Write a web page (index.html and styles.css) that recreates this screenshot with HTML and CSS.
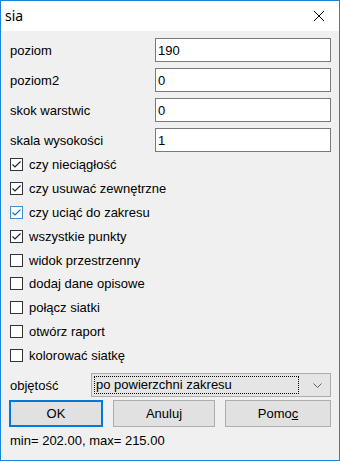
FILE: index.html
```html
<!DOCTYPE html>
<html>
  <head>
    <meta charset="utf-8" />
    <title>sia</title>
    <link rel="stylesheet" href="styles.css">
  </head>
  <body>
    <div class="window">
      <div class="titlebar">
        <span class="title">sia</span>
        <svg class="close" width="12" height="12" viewBox="0 0 12 12">
          <path d="M1 1 L11 11 M11 1 L1 11" stroke="#000" stroke-width="1" fill="none" />
        </svg>
      </div>

      <div class="client">
        <div class="fields">
          <div class="field"><label>poziom</label><input class="edit" type="text" value="190" /></div>
          <div class="field"><label>poziom2</label><input class="edit" type="text" value="0" /></div>
          <div class="field"><label>skok warstwic</label><input class="edit" type="text" value="0" /></div>
          <div class="field"><label>skala wysokości</label><input class="edit" type="text" value="1" /></div>
        </div>

        <div class="checks">
          <div class="check">
            <span class="box"><svg viewBox="0 0 11 11"><polyline points="1.5,5.5 4,8 9.5,2.5" /></svg></span>
            czy nieciągłość
          </div>
          <div class="check">
            <span class="box"><svg viewBox="0 0 11 11"><polyline points="1.5,5.5 4,8 9.5,2.5" /></svg></span>
            czy usuwać zewnętrzne
          </div>
          <div class="check">
            <span class="box hot"><svg viewBox="0 0 11 11"><polyline points="1.5,5.5 4,8 9.5,2.5" /></svg></span>
            czy uciąć do zakresu
          </div>
          <div class="check">
            <span class="box"><svg viewBox="0 0 11 11"><polyline points="1.5,5.5 4,8 9.5,2.5" /></svg></span>
            wszystkie punkty
          </div>
          <div class="check"><span class="box"></span>widok przestrzenny</div>
          <div class="check"><span class="box"></span>dodaj dane opisowe</div>
          <div class="check"><span class="box"></span>połącz siatki</div>
          <div class="check"><span class="box"></span>otwórz raport</div>
          <div class="check"><span class="box"></span>kolorować siatkę</div>
        </div>

        <div class="combo-row">
          <label>objętość</label>
          <div class="combo">
            <span class="combo-text">po powierzchni zakresu</span>
            <svg class="chevron" width="9" height="5" viewBox="0 0 9 5">
              <polyline points="0.5,0.5 4.5,4.5 8.5,0.5" />
            </svg>
          </div>
        </div>

        <div class="buttons">
          <button class="btn btn-ok">OK</button>
          <button class="btn btn-cancel">Anuluj</button>
          <button class="btn btn-help">Pomo<u>c</u></button>
        </div>

        <div class="status">min= 202.00, max= 215.00</div>
      </div>
    </div>
  </body>
</html>
```

FILE: styles.css
```css
html,
body {
  margin: 0;
  padding: 0;
}
body {
  font-family: "Liberation Sans", Arial, sans-serif;
  font-size: 13px;
  color: #000;
  background: #f0f0f0;
}
.window {
  width: 340px;
  height: 461px;
  box-sizing: border-box;
  border: 1px solid #1883d7;
  background: #f0f0f0;
  display: flex;
  flex-direction: column;
}
.titlebar {
  height: 30px;
  background: #fff;
  display: flex;
  align-items: center;
  justify-content: space-between;
  padding: 0 14px 0 4px;
}
.title {
  font-family: "Noto Sans", "Open Sans", sans-serif;
  font-size: 14px;
  margin-top: -1px;
}
.close {
  display: block;
}
.client {
  padding: 7px 8px 0 8px;
  display: flex;
  flex-direction: column;
}
.fields {
  display: flex;
  flex-direction: column;
  gap: 6px;
}
.field {
  display: grid;
  grid-template-columns: 146px 176px;
  align-items: center;
  height: 24px;
}
.field label {
  padding-left: 1px;
}
.edit {
  box-sizing: border-box;
  width: 176px;
  height: 24px;
  margin: 0;
  border: 1px solid #7a7a7a;
  background: #fff;
  padding: 0 2px;
  font-family: "Liberation Sans", Arial, sans-serif;
  font-size: 13px;
  color: #000;
  outline: none;
}
.checks {
  margin-top: 1px;
  display: flex;
  flex-direction: column;
}
.check {
  height: 23.8px;
  display: flex;
  align-items: center;
  gap: 6px;
}
.box {
  box-sizing: border-box;
  width: 13px;
  height: 13px;
  margin-left: 1px;
  border: 1px solid #333;
  background: #fff;
  display: flex;
}
.box svg {
  width: 11px;
  height: 11px;
  fill: none;
  stroke: #222;
  stroke-width: 1.1;
}
.box.hot {
  border-color: #3d8fd8;
}
.box.hot svg {
  stroke: #0f6fc6;
}
.combo-row {
  margin-top: 6px;
  display: grid;
  grid-template-columns: 82px 240px;
  align-items: center;
}
.combo-row label {
  padding-left: 1px;
}
.combo {
  box-sizing: border-box;
  height: 24px;
  border: 1px solid #acacac;
  background: #e5e5e5;
  display: flex;
  align-items: center;
  justify-content: space-between;
  padding: 0 8px 0 2px;
}
.combo-text {
  flex: 1;
  margin-right: 14px;
  padding: 1px 1px;
  border: 1px dotted #000;
  line-height: 14px;
}
.chevron {
  fill: none;
  stroke: #606060;
  stroke-width: 1;
}
.buttons {
  margin-top: 3px;
  display: flex;
  gap: 10px;
}
.btn {
  box-sizing: border-box;
  height: 27px;
  margin: 0;
  border: 1px solid #adadad;
  background: #e1e1e1;
  font-family: "Liberation Sans", Arial, sans-serif;
  font-size: 13px;
  color: #000;
  padding: 0;
}
.btn-ok {
  width: 94px;
  border: 2px solid #0078d7;
}
.btn-cancel {
  width: 102px;
}
.btn-help {
  width: 106px;
}
.status {
  margin-top: 6px;
  padding-left: 1px;
  line-height: 15px;
}
```
